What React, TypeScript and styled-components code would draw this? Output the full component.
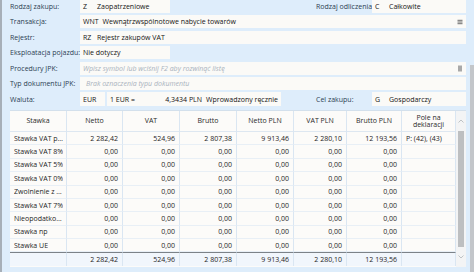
import { Fragment } from 'react';
import styled, { createGlobalStyle } from 'styled-components';

const GlobalStyle = createGlobalStyle`
  html, body {
    margin: 0;
    padding: 0;
    background: #deedfb;
  }
  * {
    box-sizing: border-box;
  }
`;

interface VatRow {
  name: string;
  netto: string;
  vat: string;
  brutto: string;
  nettoPln: string;
  vatPln: string;
  bruttoPln: string;
  pole: string;
}

const zero = '0,00';
const emptyRate = (name: string): VatRow => ({
  name,
  netto: zero,
  vat: zero,
  brutto: zero,
  nettoPln: zero,
  vatPln: zero,
  bruttoPln: zero,
  pole: '',
});

const rows: VatRow[] = [
  {
    name: 'Stawka VAT podstawowa',
    netto: '2 282,42',
    vat: '524,96',
    brutto: '2 807,38',
    nettoPln: '9 913,46',
    vatPln: '2 280,10',
    bruttoPln: '12 193,56',
    pole: 'P: (42), (43)',
  },
  emptyRate('Stawka VAT 8%'),
  emptyRate('Stawka VAT 5%'),
  emptyRate('Stawka VAT 0%'),
  emptyRate('Zwolnienie z VAT'),
  emptyRate('Stawka VAT 7%'),
  emptyRate('Nieopodatkowane'),
  emptyRate('Stawka np'),
  emptyRate('Stawka UE'),
];

const totals = ['', '2 282,42', '524,96', '2 807,38', '9 913,46', '2 280,10', '12 193,56', ''];
const headers = ['Stawka', 'Netto', 'VAT', 'Brutto', 'Netto PLN', 'VAT PLN', 'Brutto PLN', 'Pole na deklaracji'];

const Window = styled.div`
  display: flex;
  width: 474px;
  height: 272px;
  overflow: hidden;
  background: #deedfb;
  border-left: 2px solid #a7afb8;
  font-family: 'Open Sans', 'Noto Sans', sans-serif;
  font-size: 7px;
  color: #141414;
`;

const Content = styled.div`
  flex: 1;
  display: flex;
  flex-direction: column;
  padding: 0 4px 0 8px;
`;

const OuterScroll = styled.div`
  width: 4px;
  display: flex;
  flex-direction: column;
  padding-top: 65px;
`;

const OuterThumb = styled.div`
  flex: 1;
  background: #c3c6ca;
`;

const Form = styled.div`
  display: flex;
  flex-direction: column;
  gap: 2.4px;
`;

const Row = styled.div<{ $h?: number }>`
  display: flex;
  align-items: center;
  height: ${(p) => p.$h ?? 13}px;
`;

const Label = styled.span<{ $w: number }>`
  width: ${(p) => p.$w}px;
  flex-shrink: 0;
  color: #2c3d52;
  white-space: nowrap;
`;

const Field = styled.div<{ $w?: number }>`
  display: flex;
  align-items: center;
  height: 100%;
  padding: 0 3px;
  background: #fbfaf7;
  white-space: nowrap;
  ${(p) => (p.$w ? `width: ${p.$w}px; flex-shrink: 0;` : 'flex: 1;')}
`;

const Spacer = styled.div`
  flex: 1;
`;

const Code = styled.span`
  min-width: 10px;
  margin-right: 4px;
`;

const Placeholder = styled.span<{ $indent?: number }>`
  flex: 1;
  padding-left: ${(p) => p.$indent ?? 0}px;
  font-style: italic;
  color: #a9b2bd;
`;

const RateValue = styled.span`
  flex: 1;
  text-align: right;
  margin-right: 4px;
`;

const Gap = styled.div`
  width: 2px;
  flex-shrink: 0;
`;

const Table = styled.div`
  display: flex;
  height: 157px;
  margin-top: 3.6px;
  border-top: 1px solid #d3e0ec;
`;

const Grid = styled.div`
  display: grid;
  grid-template-columns: 57px 56px 57px 57px 57px 53px 55px 54px;
  grid-template-rows: 21px repeat(9, 13.4px) 14px;
  background: #fcfbf9;
  color: #1e1e1e;
`;

const Cell = styled.div<{ $align?: 'left' | 'right' | 'center' }>`
  display: flex;
  align-items: center;
  justify-content: ${(p) =>
    p.$align === 'right' ? 'flex-end' : p.$align === 'center' ? 'center' : 'flex-start'};
  padding: 0 4px;
  border-right: 1px solid #dae6f2;
  border-bottom: 1px solid #e8eff6;
  white-space: nowrap;
  overflow: hidden;
  min-width: 0;
`;

const NameCell = styled(Cell)`
  padding: 0 1px 0 4px;
`;

const HeadCell = styled(Cell)`
  text-align: center;
  white-space: normal;
  line-height: 1.05;
  padding: 0 3px;
  color: #2a2a2a;
  border-bottom-color: #dde7f1;
`;

const NameText = styled.span`
  overflow: hidden;
  text-overflow: ellipsis;
`;

const TotalCell = styled(Cell)`
  background: #f1f6fc;
  border-top: 1px solid #7c8288;
  border-bottom: none;
`;

const Scroll = styled.div`
  width: 10px;
  display: flex;
  flex-direction: column;
  align-items: center;
  background: #f3f4f5;
`;

const ScrollArrow = styled.div`
  height: 20px;
  display: flex;
  align-items: center;
  justify-content: center;
`;

const ScrollThumb = styled.div`
  width: 6px;
  flex: 1;
  background: #bdbfc1;
`;

const Arrow = ({ up }: { up?: boolean }) => (
  <svg width="6" height="4" viewBox="0 0 6 4">
    <path d={up ? 'M0.5 3.5 L3 1 L5.5 3.5' : 'M0.5 0.5 L3 3 L5.5 0.5'} fill="none" stroke="#b8bcc0" strokeWidth="0.9" />
  </svg>
);

const ListIcon = () => (
  <svg width="6" height="6" viewBox="0 0 6 6">
    <rect x="0.5" y="0.8" width="5" height="1" fill="#6e6e6e" />
    <rect x="0.5" y="2.5" width="5" height="1" fill="#6e6e6e" />
    <rect x="0.5" y="4.2" width="5" height="1" fill="#6e6e6e" />
  </svg>
);

const BoxIcon = () => (
  <svg width="6" height="7" viewBox="0 0 6 7">
    <rect x="1" y="0.5" width="4" height="6" fill="#a9a9a9" />
  </svg>
);

export default function App() {
  return (
    <>
      <GlobalStyle />
      <Window>
        <Content>
          <Form>
            <Row>
              <Label $w={70}>Rodzaj zakupu:</Label>
              <Field $w={90}>
                <Code>Z</Code>Zaopatrzeniowe
              </Field>
              <Spacer />
              <Label $w={56}>Rodzaj odliczenia:</Label>
              <Field $w={94}>
                <Code>C</Code>Całkowite
              </Field>
            </Row>
            <Row>
              <Label $w={70}>Transakcja:</Label>
              <Field>
                <Code>WNT</Code>
                <Spacer>Wewnątrzwspólnotowe nabycie towarów</Spacer>
                <ListIcon />
              </Field>
            </Row>
            <Row>
              <Label $w={70}>Rejestr:</Label>
              <Field>
                <Code>RZ</Code>Rejestr zakupów VAT
              </Field>
            </Row>
            <Row>
              <Label $w={70}>Eksploatacja pojazdu:</Label>
              <Field $w={90}>Nie dotyczy</Field>
            </Row>
            <Row>
              <Label $w={70}>Procedury JPK:</Label>
              <Field>
                <Placeholder>Wpisz symbol lub wciśnij F2 aby rozwinąć listę</Placeholder>
                <BoxIcon />
              </Field>
            </Row>
            <Row>
              <Label $w={70}>Typ dokumentu JPK:</Label>
              <Field>
                <Placeholder $indent={3}>Brak oznaczenia typu dokumentu</Placeholder>
              </Field>
            </Row>
            <Row $h={14}>
              <Label $w={70}>Waluta:</Label>
              <Field $w={25}>EUR</Field>
              <Gap />
              <Field $w={174}>
                <span>1 EUR =</span>
                <RateValue>4,3434 PLN</RateValue>
                <span>Wprowadzony ręcznie</span>
              </Field>
              <Spacer />
              <Label $w={56}>Cel zakupu:</Label>
              <Field $w={94}>
                <Code>G</Code>Gospodarczy
              </Field>
            </Row>
          </Form>
          <Table>
            <Grid>
              {headers.map((h) => (
                <HeadCell key={h} $align="center">
                  {h}
                </HeadCell>
              ))}
              {rows.map((r) => (
                <Fragment key={r.name}>
                  <NameCell>
                    <NameText>{r.name}</NameText>
                  </NameCell>
                  <Cell $align="right">{r.netto}</Cell>
                  <Cell $align="right">{r.vat}</Cell>
                  <Cell $align="right">{r.brutto}</Cell>
                  <Cell $align="right">{r.nettoPln}</Cell>
                  <Cell $align="right">{r.vatPln}</Cell>
                  <Cell $align="right">{r.bruttoPln}</Cell>
                  <Cell>{r.pole}</Cell>
                </Fragment>
              ))}
              {totals.map((t, i) => (
                <TotalCell key={'t' + i} $align="right">
                  {t}
                </TotalCell>
              ))}
            </Grid>
            <Scroll>
              <ScrollArrow>
                <Arrow up />
              </ScrollArrow>
              <ScrollThumb />
              <ScrollArrow>
                <Arrow />
              </ScrollArrow>
            </Scroll>
          </Table>
        </Content>
        <OuterScroll>
          <OuterThumb />
        </OuterScroll>
      </Window>
    </>
  );
}
